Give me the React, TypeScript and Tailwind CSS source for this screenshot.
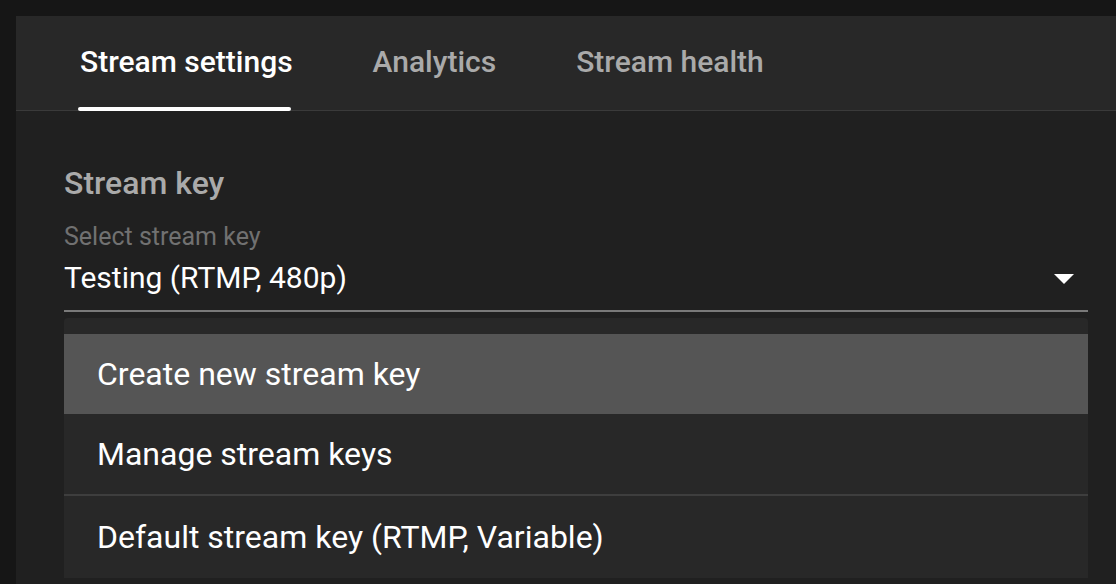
import React from "react";

export default function App() {
  const tabs = [
    { label: "Stream settings", active: true },
    { label: "Analytics", active: false },
    { label: "Stream health", active: false },
  ];
  return (
    <div
      className="w-[1116px] h-[584px] overflow-hidden bg-[#161616] pt-4 pl-4"
      style={{ fontFamily: "Roboto, 'Noto Sans', sans-serif" }}
    >
      <div className="h-full bg-[#202020] flex flex-col">
        <div className="h-[95px] shrink-0 bg-[#282828] border-b border-[#3a3a3a] flex gap-[80px] pl-16">
          {tabs.map((t) => (
            <div key={t.label} className="relative h-full pt-[30px]">
              <span
                className={`block text-[30px] leading-[32px] font-medium ${
                  t.active ? "text-white" : "text-[#aaaaaa]"
                }`}
              >
                {t.label}
              </span>
              {t.active && (
                <div className="absolute left-[-2px] right-[2px] bottom-[-1px] h-[4px] rounded-[2px] bg-white" />
              )}
            </div>
          ))}
        </div>
        <div className="pl-12 pr-[28px] flex-1">
          <div className="mt-[54px] text-[32px] leading-[36px] font-medium text-[#aaaaaa]">
            Stream key
          </div>
          <div className="mt-[21px] border-b-2 border-[#7a7a7a] pb-[14px]">
            <div className="text-[25px] leading-[30px] text-[#717171]">Select stream key</div>
            <div className="mt-[8px] flex items-center justify-between">
              <span className="text-[30px] leading-[36px] text-white">Testing (RTMP, 480p)</span>
              <svg width="20" height="10" viewBox="0 0 20 10" className="mr-[14px] mt-[2px]">
                <path d="M0 0 L20 0 L10 10 Z" fill="#ffffff" />
              </svg>
            </div>
          </div>
          <div className="mt-[6px] bg-[#282828] rounded-t-[4px] pt-4">
            <div className="h-[80px] bg-[#555555] flex items-center px-[33px] text-[32px] text-white">
              Create new stream key
            </div>
            <div className="h-[82px] flex items-center px-[33px] text-[32px] text-white border-b-2 border-[#3e3e3e]">
              Manage stream keys
            </div>
            <div className="h-[82px] flex items-center px-[33px] text-[32px] text-white">
              Default stream key (RTMP, Variable)
            </div>
          </div>
        </div>
      </div>
    </div>
  );
}
